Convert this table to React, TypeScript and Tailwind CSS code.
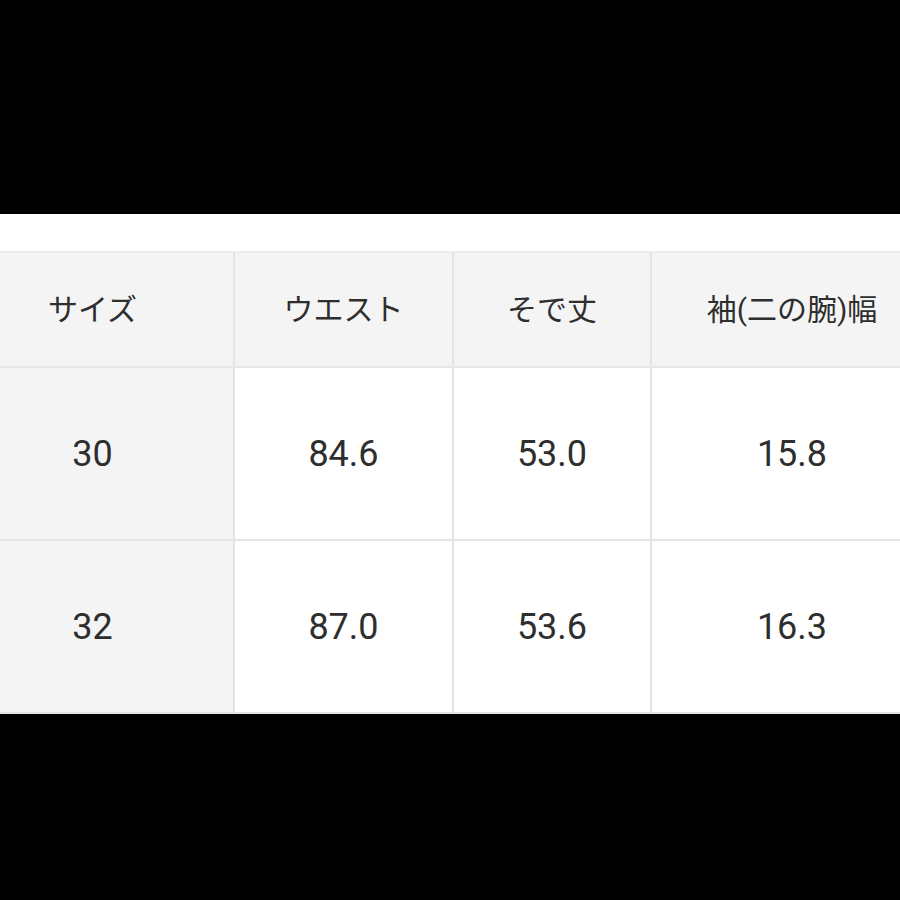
const head = ["サイズ", "ウエスト", "そで丈", "袖(二の腕)幅"];
const rows = [
  ["30", "84.6", "53.0", "15.8"],
  ["32", "87.0", "53.6", "16.3"],
];
const widths = ["w-[283px]", "w-[219px]", "w-[198px]", "w-[280px]"];

export default function App() {
  return (
    <div className="flex h-[900px] w-[900px] flex-col overflow-hidden bg-black">
      <div className="h-[214px] shrink-0" />
      <div className="shrink-0 overflow-hidden bg-white pt-[37px]">
        <div className="ml-[-48px] flex w-[980px] flex-col border-t-2 border-[#ececee] font-['Roboto','Noto_Sans_CJK_JP',sans-serif] text-[#2e2e2e]">
          {/* Header */}
          <div className="flex h-[115px] border-b-2 border-[#e6e6e8] bg-[#f4f4f5]">
            {head.map((h, i) => (
              <div
                key={h}
                className={`${widths[i]} flex shrink-0 items-center justify-center text-[30px] ${i < 3 ? "border-r-2 border-[#e4e4e6]" : ""}`}
              >
                {h}
              </div>
            ))}
          </div>
          {/* Body */}
          {rows.map((r, ri) => (
            <div key={ri} className="flex h-[173px] border-b-2 border-[#e4e4e6]">
              {r.map((c, i) => (
                <div
                  key={i}
                  className={`${widths[i]} flex shrink-0 items-center justify-center text-[36px] ${i === 0 ? "bg-[#f4f4f5]" : "bg-white"} ${i < 3 ? "border-r-2 border-[#e4e4e6]" : ""}`}
                >
                  {c}
                </div>
              ))}
            </div>
          ))}
        </div>
      </div>
      <div className="flex-1" />
    </div>
  );
}
